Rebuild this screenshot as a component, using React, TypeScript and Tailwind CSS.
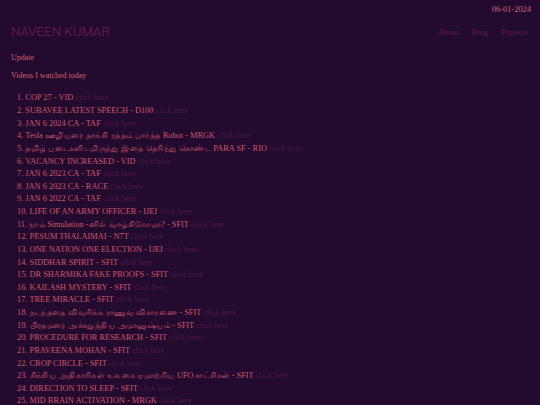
import React from "react";

const items: string[] = [
  "COP 27 - VID",
  "SUBAVEE LATEST SPEECH - D100",
  "JAN 6 2024 CA - TAF",
  "Tesla ஊழியரை தாக்கி ரத்தம் பார்த்த Robot - MRGK",
  "தமிழ் படைகளிடமிருந்து இதை தெரிந்து கொண்ட PARA SF - RIO",
  "VACANCY INCREASED - VID",
  "JAN 6 2023 CA - TAF",
  "JAN 6 2023 CA - RACE",
  "JAN 6 2022 CA - TAF",
  "LIFE OF AN ARMY OFFICER - IJEI",
  "நாம் Simulation -னில் வாழ்கிறோமா? - SFIT",
  "PESUM THALAIMAI - N7T",
  "ONE NATION ONE ELECTION - IJEI",
  "SIDDHAR SPIRIT - SFIT",
  "DR SHARMIKA FAKE PROOFS - SFIT",
  "KAILASH MYSTERY - SFIT",
  "TREE MIRACLE - SFIT",
  "நடந்ததை விவரிக்க ராணுவ விசாரணை - SFIT",
  "பிரதமரை அச்சுறுத்திய அமானுஷ்யம் - SFIT",
  "PROCEDURE FOR RESEARCH - SFIT",
  "PRAVEENA MOHAN - SFIT",
  "CROP CIRCLE - SFIT",
  "சிக்கிய அதிகாரிகள் உலகை ஏமாற்றிய UFO சாட்சிகள் - SFIT",
  "DIRECTION TO SLEEP - SFIT",
  "MID BRAIN ACTIVATION - MRGK",
];

const tamilRun = /([\u0B80-\u0BFF]+(?:\s+[\u0B80-\u0BFF]+)*)/;

function Title({ text }: { text: string }) {
  const parts = text.split(tamilRun);
  return (
    <>
      {parts.map((p, i) =>
        i % 2 === 1 ? (
          <span key={i} className="tracking-[0.42px]">
            {p}
          </span>
        ) : (
          <React.Fragment key={i}>{p}</React.Fragment>
        )
      )}
    </>
  );
}

export default function App() {
  return (
    <div className="min-h-screen w-full overflow-hidden bg-[#230b2f] font-['Liberation_Serif','Noto_Sans',serif]">
      <div className="flex justify-end pr-[9px] pt-[5px] text-[8.4px] leading-[10px] text-[#d4607a]">
        06-01-2024
      </div>
      <header className="mt-[9px] flex items-center justify-between pl-[11px] pr-[12px]">
        <div className="font-['Roboto','Liberation_Sans',sans-serif] text-[13.3px] font-light leading-[16px] text-[#7a2050]">
          NAVEEN KUMAR
        </div>
        <nav className="flex gap-[13px] pt-[2px] text-[8.4px] leading-[12px] text-[#5c1d48]">
          <a>About</a>
          <a>Blog</a>
          <a>Projects</a>
        </nav>
      </header>
      <div className="mt-[12px] pl-[11px] text-[8px] leading-[12px] text-[#d45f6f]">Update</div>
      <div className="mt-[6px] pl-[11px] text-[8px] leading-[12px] text-[#d45f6f]">Videos I watched today</div>
      <ul className="mt-[10.4px] pl-[17px]">
        {items.map((t, i) => (
          <li key={i} className="h-[12.625px] whitespace-nowrap text-[8.35px] leading-[12.625px] text-[#cf556b]">
            {i + 1}. <Title text={t} /> <span className="text-[#4c1a42]">click here</span>
          </li>
        ))}
      </ul>
    </div>
  );
}
